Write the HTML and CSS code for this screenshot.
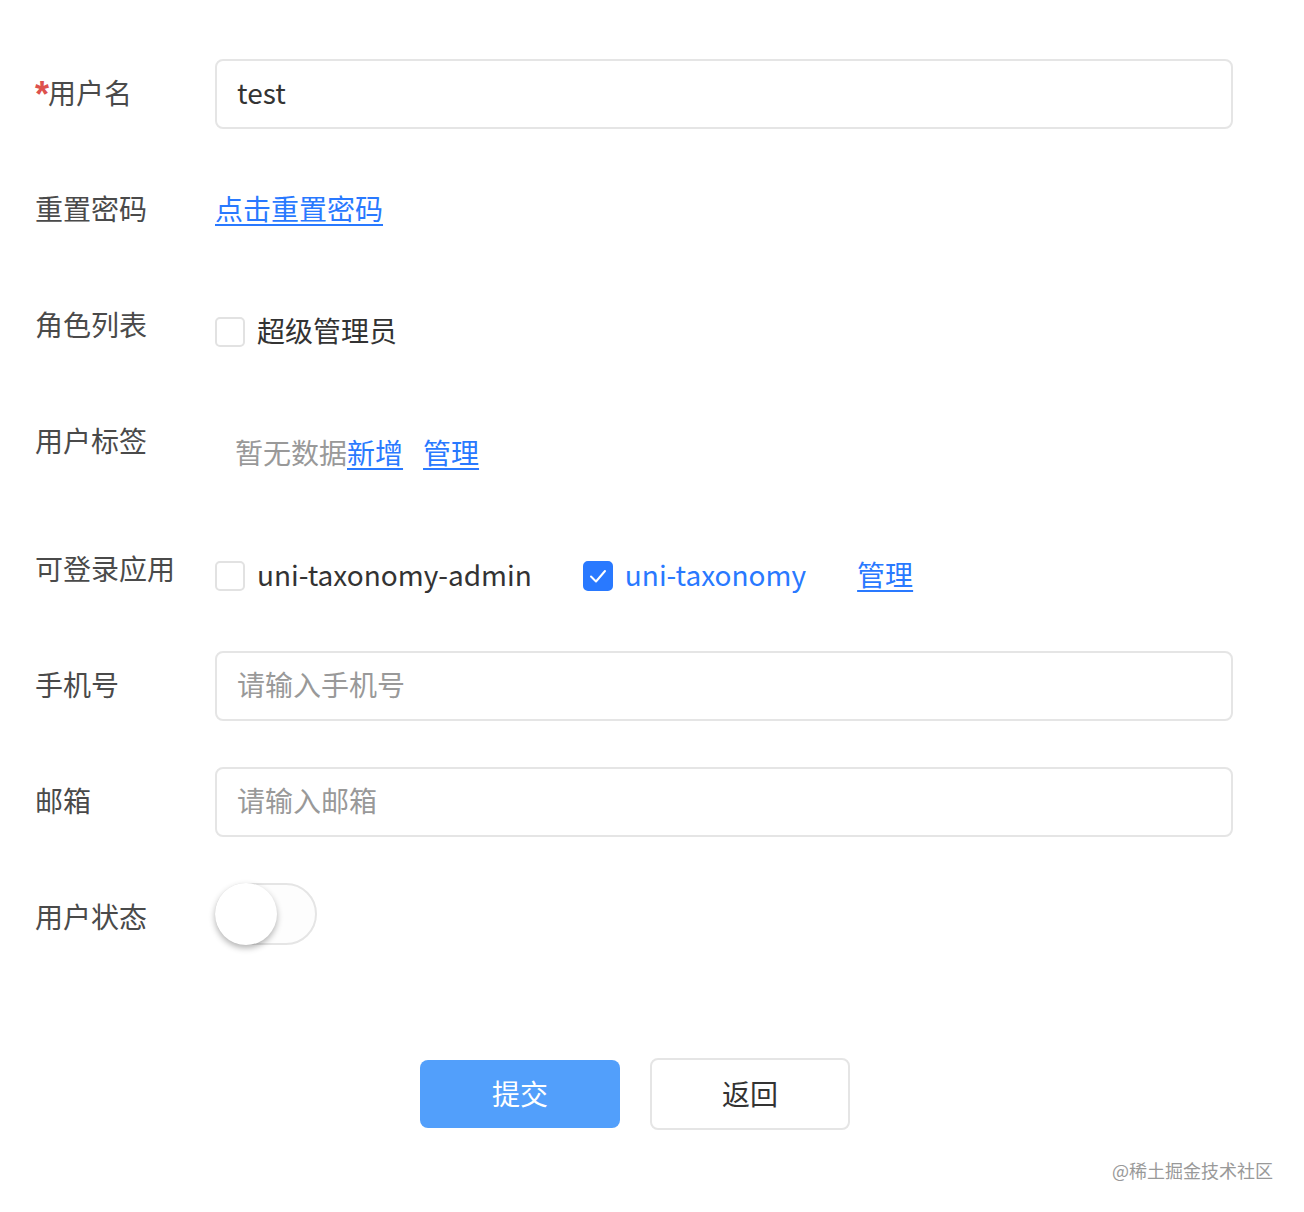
FILE: index.html
```html
<!DOCTYPE html>
<html lang="zh-CN">
<head>
    <meta charset="UTF-8">
    <meta name="viewport" content="width=device-width, initial-scale=1.0">
    <title>编辑用户</title>
    <link rel="stylesheet" href="styles.css">
</head>
<body>

    <div class="form">
        <!-- 用户名 -->
        <div class="form-item">
            <div class="form-label"><span class="required">*</span>用户名</div>
            <div class="form-content">
                <input class="form-input" type="text" value="test">
            </div>
        </div>

        <!-- 重置密码 -->
        <div class="form-item">
            <div class="form-label">重置密码</div>
            <div class="form-content">
                <a class="link" href="#">点击重置密码</a>
            </div>
        </div>

        <!-- 角色列表 -->
        <div class="form-item">
            <div class="form-label">角色列表</div>
            <div class="form-content checkbox-group">
                <label class="checkbox">
                    <span class="checkbox-box"></span>
                    <span class="checkbox-text">超级管理员</span>
                </label>
            </div>
        </div>

        <!-- 用户标签 -->
        <div class="form-item">
            <div class="form-label">用户标签</div>
            <div class="form-content tag-content">
                <span class="empty-text">暂无数据</span><a class="link" href="#">新增</a>
                <a class="link tag-manage" href="#">管理</a>
            </div>
        </div>

        <!-- 可登录应用 -->
        <div class="form-item">
            <div class="form-label">可登录应用</div>
            <div class="form-content checkbox-group">
                <label class="checkbox">
                    <span class="checkbox-box"></span>
                    <span class="checkbox-text">uni-taxonomy-admin</span>
                </label>
                <label class="checkbox checked">
                    <span class="checkbox-box">
                        <svg width="22" height="22" viewBox="0 0 22 22"><path d="M4 11.5 L9 16.5 L18 6" fill="none" stroke="#fff" stroke-width="2" stroke-linecap="round" stroke-linejoin="round"/></svg>
                    </span>
                    <span class="checkbox-text">uni-taxonomy</span>
                </label>
                <a class="link" href="#">管理</a>
            </div>
        </div>

        <!-- 手机号 -->
        <div class="form-item">
            <div class="form-label">手机号</div>
            <div class="form-content">
                <input class="form-input" type="text" placeholder="请输入手机号">
            </div>
        </div>

        <!-- 邮箱 -->
        <div class="form-item">
            <div class="form-label">邮箱</div>
            <div class="form-content">
                <input class="form-input" type="text" placeholder="请输入邮箱">
            </div>
        </div>

        <!-- 用户状态 -->
        <div class="form-item">
            <div class="form-label">用户状态</div>
            <div class="form-content switch-content">
                <div class="switch">
                    <div class="switch-knob"></div>
                </div>
            </div>
        </div>

        <div class="form-buttons">
            <button class="btn btn-primary">提交</button>
            <button class="btn btn-default">返回</button>
        </div>
    </div>

    <div class="watermark">@稀土掘金技术社区</div>

</body>
</html>
```

FILE: styles.css
```css
body {
    margin: 0;
    background-color: #fff;
    font-family: "Noto Sans CJK SC", "Noto Sans", sans-serif;
    color: #333;
    width: 1304px;
    height: 1212px;
    position: relative;
}

.form {
    padding: 59px 71px 0 35px;
}

.form-item {
    display: flex;
    align-items: flex-start;
    margin-bottom: 46px;
}

.form-label {
    width: 180px;
    flex-shrink: 0;
    height: 70px;
    box-sizing: border-box;
    line-height: 66px;
    padding-bottom: 4px;
    font-size: 28px;
    color: #4a4a4a;
    white-space: nowrap;
}

.required {
    color: #dd524d;
    font-family: "Liberation Sans", sans-serif;
    font-weight: bold;
    font-size: 36px;
    line-height: 0;
    margin-right: -1px;
    vertical-align: -3px;
}

.form-content {
    flex: 1;
    min-height: 70px;
    display: flex;
    align-items: center;
    font-size: 28px;
}

/* lift text a little so glyphs sit on the row centre */
.form-content .link,
.form-content .checkbox-text,
.form-content .empty-text {
    margin-top: -4px;
}

.form-input {
    width: 100%;
    height: 70px;
    box-sizing: border-box;
    border: 2px solid #e5e5e5;
    border-radius: 8px;
    padding: 0 20px 4px;
    font-family: inherit;
    font-size: 28px;
    color: #333;
    outline: none;
}

.form-input::placeholder {
    color: #999;
}

.link {
    color: #2979ff;
    text-decoration: underline;
    text-underline-offset: 4px;
    text-decoration-thickness: 2px;
}

/* Checkbox */
.checkbox-group {
    box-sizing: border-box;
    height: 70px;
    padding-top: 12px;
}

.checkbox {
    display: flex;
    align-items: center;
    margin-right: 51px;
}

.checkbox-box {
    width: 30px;
    height: 30px;
    box-sizing: border-box;
    border: 2px solid #e2e2e2;
    border-radius: 5px;
    background-color: #fff;
    margin-right: 12px;
    display: flex;
    align-items: center;
    justify-content: center;
}

.checkbox-text {
    color: #333;
}

.checkbox.checked .checkbox-box {
    background-color: #2979ff;
    border-color: #2979ff;
}

.checkbox.checked .checkbox-text {
    color: #2979ff;
}

/* Tags */
.tag-content {
    box-sizing: border-box;
    min-height: 82px;
    padding: 24px 0 12px 20px;
    line-height: 46px;
    align-items: flex-start;
}

.tag-content .link,
.tag-content .empty-text {
    margin-top: -2px;
}

.empty-text {
    color: #999;
}

.tag-manage {
    margin-left: 20px;
}

/* Switch */
.switch-content {
    align-items: flex-start;
}

.switch {
    width: 102px;
    height: 62px;
    box-sizing: border-box;
    border: 2px solid #e5e5e5;
    border-radius: 31px;
    background-color: #fdfdfd;
    display: flex;
    align-items: center;
}

.switch-knob {
    width: 62px;
    height: 62px;
    margin-left: -2px;
    border-radius: 50%;
    background-color: #fff;
    box-shadow: 0 3px 6px rgba(0, 0, 0, 0.3);
}

/* Buttons */
.form-buttons {
    display: flex;
    justify-content: center;
    align-items: center;
    gap: 30px;
    margin-top: 105px;
    padding-left: 2px;
}

.btn {
    width: 200px;
    font-family: inherit;
    font-size: 28px;
    border-radius: 8px;
    padding-bottom: 3px;
    cursor: pointer;
}

.btn-primary {
    height: 68px;
    background-color: #529ffb;
    color: #fff;
    border: none;
}

.btn-default {
    height: 72px;
    background-color: #fff;
    color: #333;
    border: 2px solid #e5e5e5;
}

.watermark {
    position: absolute;
    right: 31px;
    top: 1157px;
    font-size: 18px;
    color: #999;
    line-height: 26px;
}
```
